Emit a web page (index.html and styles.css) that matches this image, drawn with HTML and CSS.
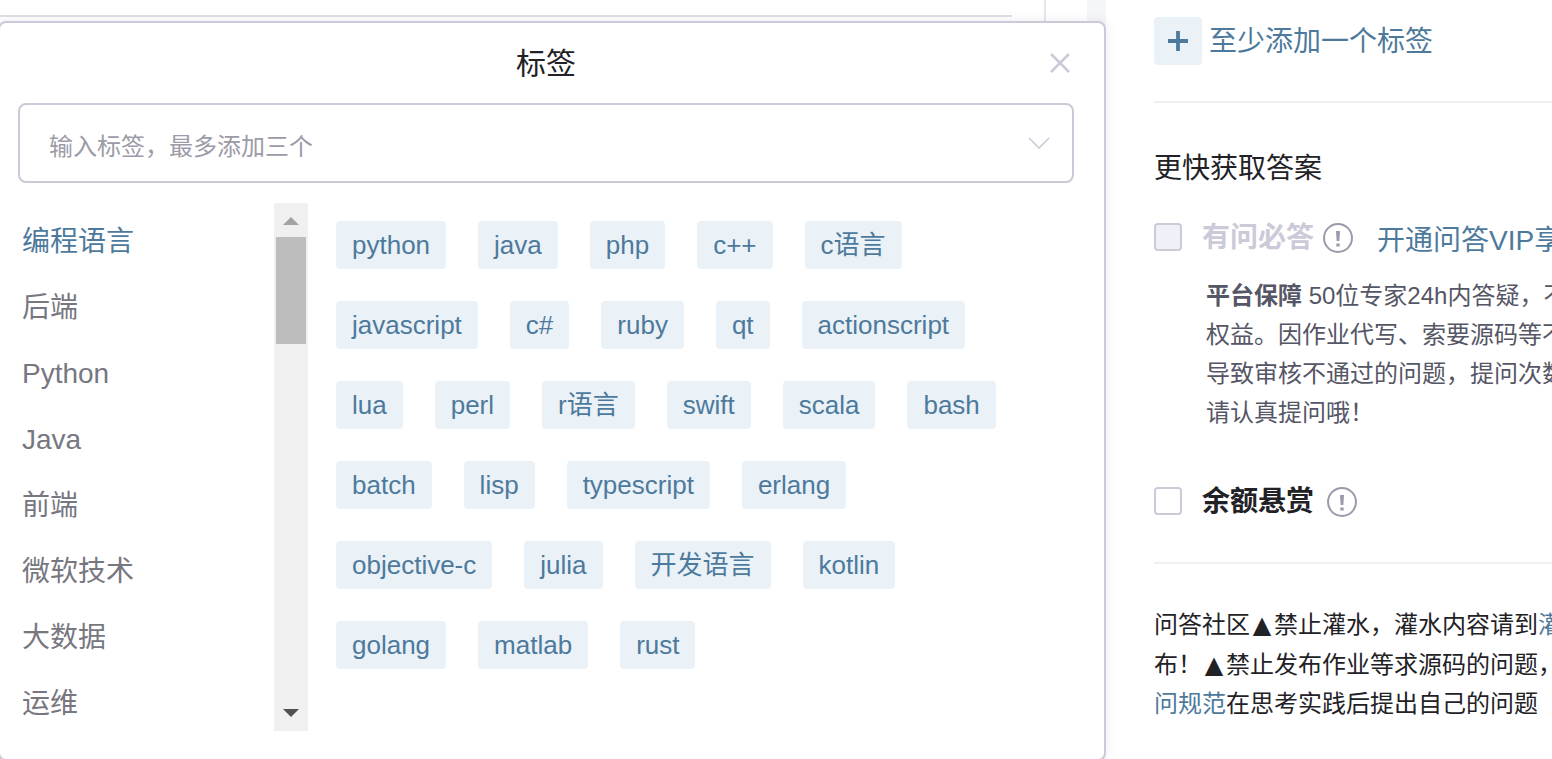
FILE: index.html
```html
<!DOCTYPE html>
<html lang="zh">
<head>
<meta charset="utf-8">
<title>标签</title>
<link rel="stylesheet" href="styles.css">
</head>
<body>
<div class="page">
  <div class="main"><div class="main-rule"></div></div>
  <div class="gutter"></div>
  <aside class="side">
    <div class="add-row">
      <span class="add-btn"><svg width="20" height="20" viewBox="0 0 20 20"><path d="M10 0v20M0 10h20" stroke="#4d7a9c" stroke-width="3.8" fill="none"/></svg></span>
      <span class="add-text">至少添加一个标签</span>
    </div>
    <hr class="rule rule-top">
    <h2 class="side-title">更快获取答案</h2>
    <div class="opt-row opt-vip">
      <span class="check check-off"></span>
      <strong class="opt-name opt-muted">有问必答</strong>
      <svg class="info" width="30" height="30" viewBox="0 0 30 30"><circle cx="15" cy="15" r="14" fill="none" stroke="#9a9aab" stroke-width="2"/><path d="M13 8h4l-.6 10h-2.800z" fill="#9a9aab"/><rect x="13.300" y="20.500" width="3.400" height="3" fill="#9a9aab"/></svg>
      <span class="vip-link">开通问答VIP享受更多权益</span>
    </div>
    <div class="para">
      <p><b>平台保障</b> 50位专家24h内答疑，不满意可退款保障您的</p>
      <p>权益。因作业代写、索要源码等不符合社区规范</p>
      <p>导致审核不通过的问题，提问次数不予退还，</p>
      <p>请认真提问哦！</p>
    </div>
    <div class="opt-row opt-bounty">
      <span class="check"></span>
      <strong class="opt-name">余额悬赏</strong>
      <svg class="info" width="30" height="30" viewBox="0 0 30 30"><circle cx="15" cy="15" r="14" fill="none" stroke="#9a9aab" stroke-width="2"/><path d="M13 8h4l-.6 10h-2.800z" fill="#9a9aab"/><rect x="13.300" y="20.500" width="3.400" height="3" fill="#9a9aab"/></svg>
    </div>
    <hr class="rule rule-bottom">
    <div class="notice">
      <p>问答社区<span class="tri">▲</span>禁止灌水，灌水内容请到<a>灌水乐园</a>发</p>
      <p>布！<span class="tri">▲</span>禁止发布作业等求源码的问题，请遵守提</p>
      <p><a>问规范</a>在思考实践后提出自己的问题</p>
    </div>
  </aside>
</div>

<section class="dialog">
  <header class="dialog-head">
    <h1>标签</h1>
    <svg class="close" width="20" height="20" viewBox="0 0 20 20"><path d="M1 1l18 18M19 1L1 19" stroke="#ccc9d8" stroke-width="2.6" fill="none"/></svg>
  </header>
  <div class="select">
    <span>输入标签，最多添加三个</span>
    <svg width="22" height="12" viewBox="0 0 22 12"><path d="M1 1l10 10L21 1" stroke="#ccc9d8" stroke-width="1.6" fill="none"/></svg>
  </div>
  <div class="picker">
    <ul class="cats">
      <li class="active">编程语言</li>
      <li>后端</li>
      <li>Python</li>
      <li>Java</li>
      <li>前端</li>
      <li>微软技术</li>
      <li>大数据</li>
      <li>运维</li>
    </ul>
    <div class="scroll">
      <span class="arrow arrow-up"></span>
      <span class="thumb"></span>
      <span class="arrow arrow-down"></span>
    </div>
    <div class="tags">
      <span>python</span><span>java</span><span>php</span><span>c++</span><span>c语言</span>
      <span>javascript</span><span>c#</span><span>ruby</span><span>qt</span><span>actionscript</span>
      <span>lua</span><span>perl</span><span>r语言</span><span>swift</span><span>scala</span><span>bash</span>
      <span>batch</span><span>lisp</span><span>typescript</span><span>erlang</span>
      <span>objective-c</span><span>julia</span><span>开发语言</span><span>kotlin</span>
      <span>golang</span><span>matlab</span><span>rust</span>
    </div>
  </div>
</section>
</body>
</html>
```
FILE: styles.css
```css
* { box-sizing: border-box; }
html, body { margin: 0; height: 100%; overflow: hidden; background: #fff; }
body { font-family: "Liberation Sans", "Noto Sans CJK SC", sans-serif; color: #222226; }
p, h1, h2, ul { margin: 0; padding: 0; }

.page { display: flex; height: 759px; width: 1552px; overflow: hidden; }
.main { width: 1046px; flex: none; border-right: 2px solid #e6e6ea; padding-top: 15px; }
.main-rule { width: 1012px; height: 2px; background: #e0dfe4; }
.gutter { flex: none; margin-left: 41px; width: 19px; background: #f5f6f8; }

.side { flex: 1; min-width: 0; padding: 17px 0 0 48px; overflow: hidden; white-space: nowrap; }
.add-row { display: flex; align-items: center; gap: 7px; height: 48px; }
.add-btn { width: 48px; height: 48px; background: #eaf1f7; border-radius: 4px; display: flex; align-items: center; justify-content: center; }
.add-text { font-size: 28px; line-height: 44px; margin-top: 2px; color: #4d7a9c; }
.rule { border: 0; height: 2px; background: #f0f0f2; margin: 0; }
.rule-top { margin-top: 36px; }
.side-title { font-size: 28px; font-weight: 400; line-height: 40px; margin-top: 46px; }

.opt-row { display: flex; align-items: center; height: 30px; }
.opt-vip { margin-top: 34px; }
.opt-bounty { margin-top: 55px; }
.check { width: 28px; height: 28px; border: 2px solid #ccc9d8; border-radius: 4px; flex: none; background: #fff; margin: -2px 20px 0 0; }
.check-off { background: #eef1fa; }
.opt-name { font-size: 28px; font-weight: 700; line-height: 30px; margin-right: 9px; }
.opt-muted { color: #ccc9d8; }
.opt-bounty .opt-name { margin-right: 13px; }
.info { flex: none; }
.vip-link { font-size: 28px; color: #4d7a9c; margin-left: 24px; }

.para { margin: 23px 0 0 52px; font-size: 24px; line-height: 39px; color: #555666; }
.para b { font-weight: 700; }

.rule-bottom { margin-top: 45px; }
.notice { font-size: 24px; line-height: 39.5px; margin-top: 41px; color: #222226; }
.notice a { color: #4d7a9c; }
.tri { display: inline-block; width: 24px; text-align: center; line-height: 1; font-family: "DejaVu Sans", sans-serif; }

.dialog { position: absolute; left: -2px; top: 21px; width: 1108px; height: 740px; background: #fff; border: 2px solid #ccc9d8; border-radius: 8px; padding: 0 30px 0 18px; box-shadow: 0 0 12px rgba(100, 100, 130, .12); }
.dialog-head { position: relative; height: 80px; display: flex; align-items: center; justify-content: center; }
.dialog-head h1 { font-size: 30px; font-weight: 400; line-height: 40px; margin-top: 2px; }
.close { position: absolute; right: 4px; top: 30px; }
.select { display: flex; align-items: center; justify-content: space-between; height: 80px; border: 2px solid #ccc9d8; border-radius: 8px; padding: 0 22px 0 29px; font-size: 24px; color: #9c9ba7; }
.select span { margin-top: 2px; }
.picker { display: flex; margin-top: 20px; }
.cats { list-style: none; width: 256px; flex: none; font-size: 28px; color: #77777f; padding: 6px 0 0 4px; }
.cats li { height: 66px; line-height: 66px; }
.cats .active { color: #4d7a9c; }
.scroll { position: relative; width: 34px; height: 528px; flex: none; background: #f0f0f0; border-radius: 2px 2px 0 0; }
.thumb { position: absolute; left: 2px; top: 34px; width: 30px; height: 107px; background: #bdbdbd; }
.arrow { position: absolute; left: 9px; width: 0; height: 0; border-left: 8px solid transparent; border-right: 8px solid transparent; }
.arrow-up { top: 14px; border-bottom: 8px solid #a3a3a3; }
.arrow-down { bottom: 14px; border-top: 8px solid #505050; }
.tags { flex: 1; min-width: 0; display: flex; flex-wrap: wrap; align-content: flex-start; gap: 32px; padding: 18px 60px 0 28px; }
.tags span { height: 48px; line-height: 48px; padding: 0 16px; font-size: 26px; color: #4d7a9c; background: #eaf1f7; border-radius: 4px; white-space: nowrap; }
```
